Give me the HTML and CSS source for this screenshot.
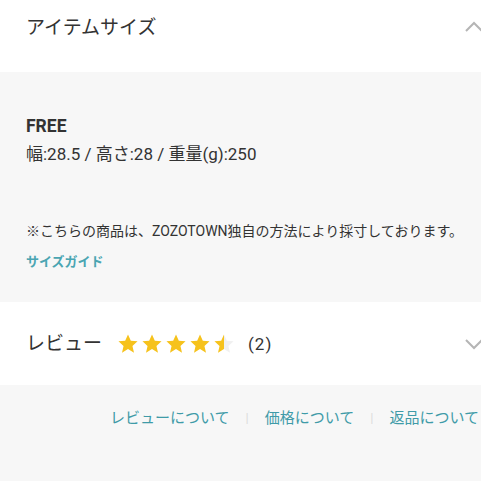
FILE: index.html
```html
<!DOCTYPE html>
<html lang="ja">
<head>
  <meta charset="UTF-8">
  <meta name="viewport" content="width=device-width, initial-scale=1.0">
  <title>アイテムサイズ</title>
  <link rel="stylesheet" href="styles.css">
</head>
<body>

  <div class="section-head">
      <h2 class="section-title">アイテムサイズ</h2>
      <svg class="chevron" width="16" height="14" viewBox="0 0 16 14">
          <path d="M1 12 L9 4 L17 12" fill="none" stroke="#b5b5b5" stroke-width="2"/>
      </svg>
  </div>

  <div class="size-panel">
      <p class="size-name">FREE</p>
      <p class="size-spec">幅:28.5 / 高さ:28 / 重量(g):250</p>
      <p class="size-note">※こちらの商品は、ZOZOTOWN独自の方法により採寸しております。</p>
      <a class="size-guide">サイズガイド</a>
  </div>

  <div class="review-head">
      <h2 class="section-title">レビュー</h2>
      <div class="stars">
          <svg width="20" height="20" viewBox="1 1 22 22"><path class="star" d="M12 1.5l3.1 6.9 7.4.7-5.6 5 1.7 7.4L12 17.6l-6.6 3.9 1.7-7.4-5.6-5 7.4-.7z"/></svg>
          <svg width="20" height="20" viewBox="1 1 22 22"><path class="star" d="M12 1.5l3.1 6.9 7.4.7-5.6 5 1.7 7.4L12 17.6l-6.6 3.9 1.7-7.4-5.6-5 7.4-.7z"/></svg>
          <svg width="20" height="20" viewBox="1 1 22 22"><path class="star" d="M12 1.5l3.1 6.9 7.4.7-5.6 5 1.7 7.4L12 17.6l-6.6 3.9 1.7-7.4-5.6-5 7.4-.7z"/></svg>
          <svg width="20" height="20" viewBox="1 1 22 22"><path class="star" d="M12 1.5l3.1 6.9 7.4.7-5.6 5 1.7 7.4L12 17.6l-6.6 3.9 1.7-7.4-5.6-5 7.4-.7z"/></svg>
          <svg width="20" height="20" viewBox="1 1 22 22">
              <defs>
                  <linearGradient id="half">
                      <stop offset="50%" stop-color="#f6c21c"/>
                      <stop offset="50%" stop-color="#f0f0f0"/>
                  </linearGradient>
              </defs>
              <path fill="url(#half)" d="M12 1.5l3.1 6.9 7.4.7-5.6 5 1.7 7.4L12 17.6l-6.6 3.9 1.7-7.4-5.6-5 7.4-.7z"/>
          </svg>
      </div>
      <span class="review-count">(2)</span>
      <svg class="chevron" width="16" height="14" viewBox="0 0 16 14">
          <path d="M1 3 L9 11 L17 3" fill="none" stroke="#b5b5b5" stroke-width="2"/>
      </svg>
  </div>

  <div class="foot-links">
      <a>レビューについて</a>
      <span class="sep">|</span>
      <a>価格について</a>
      <span class="sep">|</span>
      <a>返品について</a>
  </div>

</body>
</html>
```

FILE: styles.css
```css
body {
    margin: 0;
    width: 481px;
    height: 481px;
    overflow: hidden;
    font-family: Roboto, "Noto Sans CJK JP", sans-serif;
    color: #333;
    background-color: #f7f7f7;
}

p {
    margin: 0;
}

.section-head {
    display: flex;
    justify-content: space-between;
    align-items: flex-start;
    height: 72px;
    padding-left: 26px;
    background-color: white;
}

.section-title {
    margin: 0;
    font-size: 19px;
    font-weight: normal;
    line-height: 24px;
}

.section-head .section-title {
    margin-top: 16px;
}

.section-head .chevron {
    margin-top: 19px;
}

.size-panel {
    height: 230px;
    box-sizing: border-box;
    padding: 43px 26px 0;
}

.size-name {
    font-size: 17.5px;
    font-weight: bold;
    line-height: 22px;
}

.size-spec {
    margin-top: 6px;
    font-size: 17px;
    line-height: 22px;
}

.size-note {
    margin-top: 56px;
    font-size: 14px;
    line-height: 20px;
    white-space: nowrap;
}

.size-guide {
    display: block;
    margin-top: 11px;
    font-size: 13px;
    font-weight: bold;
    line-height: 20px;
    color: #4aa5b2;
}

.review-head {
    display: flex;
    align-items: center;
    height: 83px;
    padding-left: 26px;
    background-color: white;
}

.stars {
    display: flex;
    gap: 4px;
    margin-left: 16px;
}

.star {
    fill: #f6c21c;
}

.review-count {
    margin-left: 14px;
    font-size: 17px;
    letter-spacing: 1px;
}

.review-head .chevron {
    margin-left: auto;
}

.foot-links {
    display: flex;
    gap: 16px;
    padding: 22px 0 0 110px;
    font-size: 15px;
    line-height: 22px;
    white-space: nowrap;
    color: #3f9ba8;
}

.sep {
    color: #dcdcdc;
    font-size: 13px;
}
```
